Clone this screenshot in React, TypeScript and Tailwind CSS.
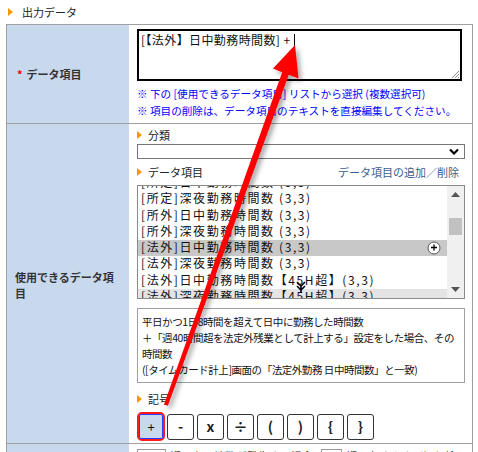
import React from 'react'

const FONT = { fontFamily: '"Noto Sans CJK JP", "Noto Sans", sans-serif' }

const LIST_ITEMS = [
  '[所定]日中勤務時間数 (3,3)',
  '[所定]深夜勤務時間数 (3,3)',
  '[所外]日中勤務時間数 (3,3)',
  '[所外]深夜勤務時間数 (3,3)',
  '[法外]日中勤務時間数 (3,3)',
  '[法外]深夜勤務時間数 (3,3)',
  '[法外]日中勤務時間数【45H超】(3,3)',
  '[法外]深夜勤務時間数【45H超】(3,3)',
]

const SYMBOLS = ['-', 'x', '÷', '(', ')', '{', '}']

const Tri = () => (
  <span className="mr-[6px] inline-block h-0 w-0 border-y-[4px] border-l-[5px] border-y-transparent border-l-[#f39800]" />
)

const SubLabel = ({ children }: { children: React.ReactNode }) => (
  <div className="flex h-[16px] items-center text-[11px] leading-[16px] text-[#222]">
    <Tri />
    {children}
  </div>
)

const DataList = () => (
  <div className="relative mt-[5px] flex h-[114px] w-[328px] border border-[#8a8a8a] bg-white">
    <div className="relative flex-1 overflow-hidden">
      <div className="mt-[-11px]">
        {LIST_ITEMS.map((item, i) => (
          <div
            key={item}
            className={`h-[16.3px] whitespace-nowrap pl-[3px] text-[12px] leading-[14px] tracking-[1.6px] text-[#111] ${
              i === 4 ? 'bg-[#c8c8c8]' : i === 7 ? 'bg-[#e4e4e4]' : ''
            }`}
          >
            {item}
          </div>
        ))}
      </div>
      {/* cursor: add */}
      <svg className="absolute left-[289px] top-[55px]" width="15" height="15" viewBox="0 0 15 15">
        <circle cx="7" cy="7" r="6" fill="#fff" stroke="#555" strokeWidth="1" />
        <path d="M7 3.5v6M4 6.5h6" stroke="#000" strokeWidth="1.3" />
      </svg>
      {/* cursor: scroll */}
      <svg className="absolute left-[158px] top-[95px]" width="10" height="12" viewBox="0 0 10 12">
        <path d="M1 1l4 4 4-4M1 5l4 4 4-4M5 5v7" stroke="#000" strokeWidth="1.6" fill="none" />
      </svg>
    </div>
    <div className="flex w-[17px] flex-col items-center bg-[#f0f0f0]">
      <svg className="mt-[6px]" width="9" height="5" viewBox="0 0 9 5">
        <path d="M0 5L4.5 0L9 5Z" fill="#555" />
      </svg>
      <div className="mt-[21px] h-[17px] w-[13px] bg-[#c1c1c1]" />
      <div className="flex-1" />
      <svg className="mb-[6px]" width="9" height="5" viewBox="0 0 9 5">
        <path d="M0 0L4.5 5L9 0Z" fill="#555" />
      </svg>
    </div>
  </div>
)

const Arrow = () => (
  <svg className="pointer-events-none absolute left-0 top-0" width="478" height="452" viewBox="0 0 478 452">
    <defs>
      <filter id="sh" x="-20%" y="-20%" width="140%" height="140%">
        <feDropShadow dx="3" dy="3" stdDeviation="2.5" floodColor="#000" floodOpacity="0.35" />
      </filter>
    </defs>
    <polygon
      filter="url(#sh)"
      fill="#ff0000"
      points="295,45 298.5,78.5 288.8,74.7 167.9,405.7 164.1,404.3 282.2,72.3 273,68.5"
    />
  </svg>
)

export default function App() {
  return (
    <div className="relative h-[452px] w-[478px] overflow-hidden bg-white" style={FONT}>
      <div className="flex h-[24px] items-center pl-[8px] text-[11px] text-[#222]">
        <span className="mr-[9px] inline-block h-0 w-0 border-y-[4px] border-l-[5px] border-y-transparent border-l-[#f39800]" />
        出力データ
      </div>

      <div className="ml-[6px] w-[467px] border-x border-t border-[#a0a0a0]">
        {/* row 1 */}
        <div className="flex h-[99px] border-b border-[#a0a0a0]">
          <div className="flex w-[122px] items-center bg-[#c8d9ee] pl-[10px] text-[11px] font-bold text-[#333]">
            <span className="mr-[4px] text-[#ff0000]">*</span>
            データ項目
          </div>
          <div className="flex-1 pl-[8px] pt-[4px]">
            <div className="relative h-[52px] w-[325px] border-2 border-black px-[2px] pt-[1px] text-[12px] leading-[16px] tracking-[0.4px] text-[#111]">
              <span>[【法外】日中勤務時間数] + </span>
              <span className="inline-block h-[13px] w-px translate-y-[2px] bg-black" />
              <svg className="absolute bottom-[1px] right-[1px]" width="8" height="8" viewBox="0 0 8 8">
                <path d="M8 1L1 8M8 4L4 8M8 7L7 8" stroke="#888" strokeWidth="1" />
              </svg>
            </div>
            <div className="mt-[4px] whitespace-nowrap text-[10.6px] leading-[17px] text-[#0000ff]">
              <div>※ 下の [使用できるデータ項目] リストから選択 (複数選択可)</div>
              <div>※ 項目の削除は、データ項目のテキストを直接編集してください。</div>
            </div>
          </div>
        </div>

        {/* row 2 */}
        <div className="flex h-[320px] border-b border-[#a0a0a0]">
          <div className="flex w-[122px] items-center bg-[#c8d9ee] pl-[8px] pr-[6px] pt-[2px] text-[11px] font-bold leading-[16px] text-[#333]">
            使用できるデータ項目
          </div>
          <div className="flex-1 pl-[8px] pt-[3px]">
            <SubLabel>分類</SubLabel>
            <div className="mt-[1px] flex h-[15px] w-[328px] items-center justify-end border border-[#767676] bg-white pr-[5px]">
              <svg width="10" height="7" viewBox="0 0 10 7">
                <path d="M1 1.5l4 4 4-4" stroke="#000" strokeWidth="2.2" fill="none" />
              </svg>
            </div>
            <div className="mt-[5px] flex w-[328px] items-center justify-between pr-[6px]">
              <SubLabel>データ項目</SubLabel>
              <span className="text-[11px] leading-[16px] text-[#3b5e8c]">データ項目の追加／削除</span>
            </div>
            <DataList />
            <div className="mt-[9px] h-[75px] w-[328px] overflow-hidden whitespace-nowrap border border-[#a0a0a0] px-[4px] pt-[5px] text-[10.5px] leading-[16px] tracking-[-0.45px] text-[#111]">
              <div>平日かつ1日8時間を超えて日中に勤務した時間数</div>
              <div>＋「週40時間超を法定外残業として計上する」設定をした場合、その</div>
              <div>時間数</div>
              <div>([タイムカード計上]画面の「法定外勤務 日中時間数」と一致)</div>
            </div>
            <div className="mt-[8px]">
              <SubLabel>記号</SubLabel>
            </div>
            <div className="mt-[5px] flex h-[29px] items-center gap-[2px]">
              <div className="flex h-[29px] w-[28px] items-center justify-center rounded-[5px] border-2 border-[#ff1a1a]">
                <div className="flex h-[25px] w-[24px] items-center justify-center rounded-[2px] border border-[#2a3cff] bg-[#c8d9ee] text-[13px] text-[#111]">
                  +
                </div>
              </div>
              {SYMBOLS.map(s => (
                <div
                  key={s}
                  className="mr-[1px] flex h-[26px] w-[27px] items-center justify-center rounded-[3px] border border-[#333] bg-white text-[14px] font-bold text-[#222]"
                >
                  {s}
                </div>
              ))}
            </div>
          </div>
        </div>

        {/* row 3 (cut off) */}
        <div className="flex h-[40px]">
          <div className="w-[122px] bg-[#c8d9ee]" />
          <div className="flex flex-1 items-start gap-[4px] pl-[8px] pt-[4px] text-[11px] leading-[16px] text-[#333]">
            <span className="mt-[1px] inline-block h-[16px] w-[30px] border border-[#999]" />
            <span>桁以上の端数が発生する場合は</span>
            <span className="mt-[1px] inline-block h-[16px] w-[22px] border border-[#999]" />
            <span>桁で丸めます（切り捨て）</span>
          </div>
        </div>
      </div>

      <Arrow />
    </div>
  )
}
